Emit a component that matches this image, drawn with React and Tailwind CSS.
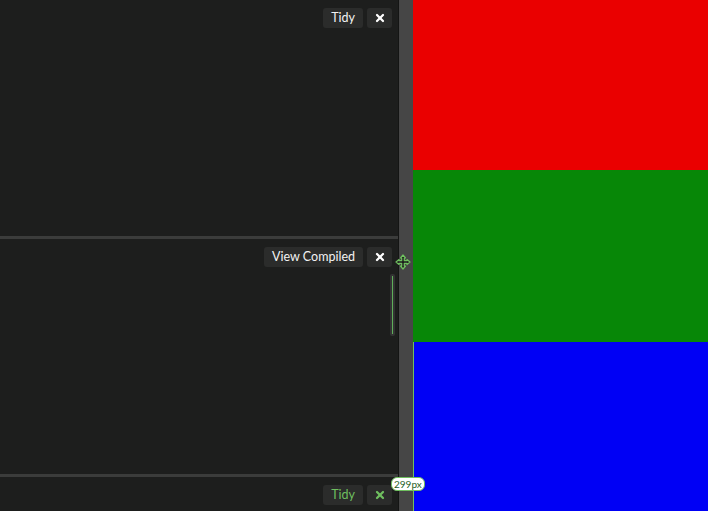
import { X } from "lucide-react";

function Btn({ children, green }) {
  return (
    <span
      className={
        "h-[20px] px-2 rounded-[3px] bg-[#2b2c2b] inline-flex items-center text-[12.5px] leading-none " +
        (green ? "text-[#6fbf5f]" : "text-[#f2f2f2]")
      }
    >
      {children}
    </span>
  );
}

function CloseBtn({ green }) {
  return (
    <span className="h-[20px] w-[25px] rounded-[3px] bg-[#2b2c2b] inline-flex items-center justify-center">
      <X size={12} strokeWidth={4.5} className={green ? "text-[#6fbf5f]" : "text-white"} />
    </span>
  );
}

function Panel({ label, height, green, scroll }) {
  return (
    <div className="relative bg-[#1d1e1d]" style={{ height }}>
      <div className="flex justify-end gap-[4px] pt-[8px] pr-[6px]">
        <Btn green={green}>{label}</Btn>
        <CloseBtn green={green} />
      </div>
      {scroll && (
        <div className="absolute right-[3px] top-[35px] w-[5px] h-[62px] rounded-[2px] bg-[#333] flex justify-center py-[2px]">
          <div className="w-[1px] h-full bg-[#5fae5a]" />
        </div>
      )}
    </div>
  );
}

export default function App() {
  return (
    <div className="flex w-[708px] h-[511px] overflow-hidden" style={{ fontFamily: "Lato, 'Open Sans', sans-serif" }}>
      <div className="w-[399px] flex flex-col bg-[#1d1e1d] border-r border-[#141514]">
        <Panel label="Tidy" height={236} />
        <div className="h-[3px] bg-[#3b3c3b]" />
        <Panel label="View Compiled" height={235} scroll />
        <div className="h-[3px] bg-[#3b3c3b]" />
        <Panel label="Tidy" height={34} green />
      </div>
      <div className="relative w-[14px] bg-[#464646]">
        <svg className="absolute left-[-4px] top-[254px]" width="16" height="16" viewBox="0 0 16 16">
          <path
            d="M8 1 L10.5 4 H9.3 V6.7 H12 V5.5 L15 8 L12 10.5 V9.3 H9.3 V12 H10.5 L8 15 L5.5 12 H6.7 V9.3 H4 V10.5 L1 8 L4 5.5 V6.7 H6.7 V4 H5.5 Z"
            fill="#1d1e1d"
            stroke="#6fbf5f"
            strokeWidth="1.2"
            strokeLinejoin="round"
          />
        </svg>
        <span className="absolute left-[-8px] top-[477px] h-[14px] px-[2px] rounded-[6px] bg-white text-[10px] leading-[13px] text-[#1f5f1f] border border-[#6fbf5f]">
          299px
        </span>
      </div>
      <div className="flex-1 flex flex-col">
        <div className="h-[170px] bg-[#ea0000]" />
        <div className="h-[172px] bg-[#078707]" />
        <div className="flex-1 bg-[#0000f5] border-l border-[#6fbf5f]" />
      </div>
    </div>
  );
}
